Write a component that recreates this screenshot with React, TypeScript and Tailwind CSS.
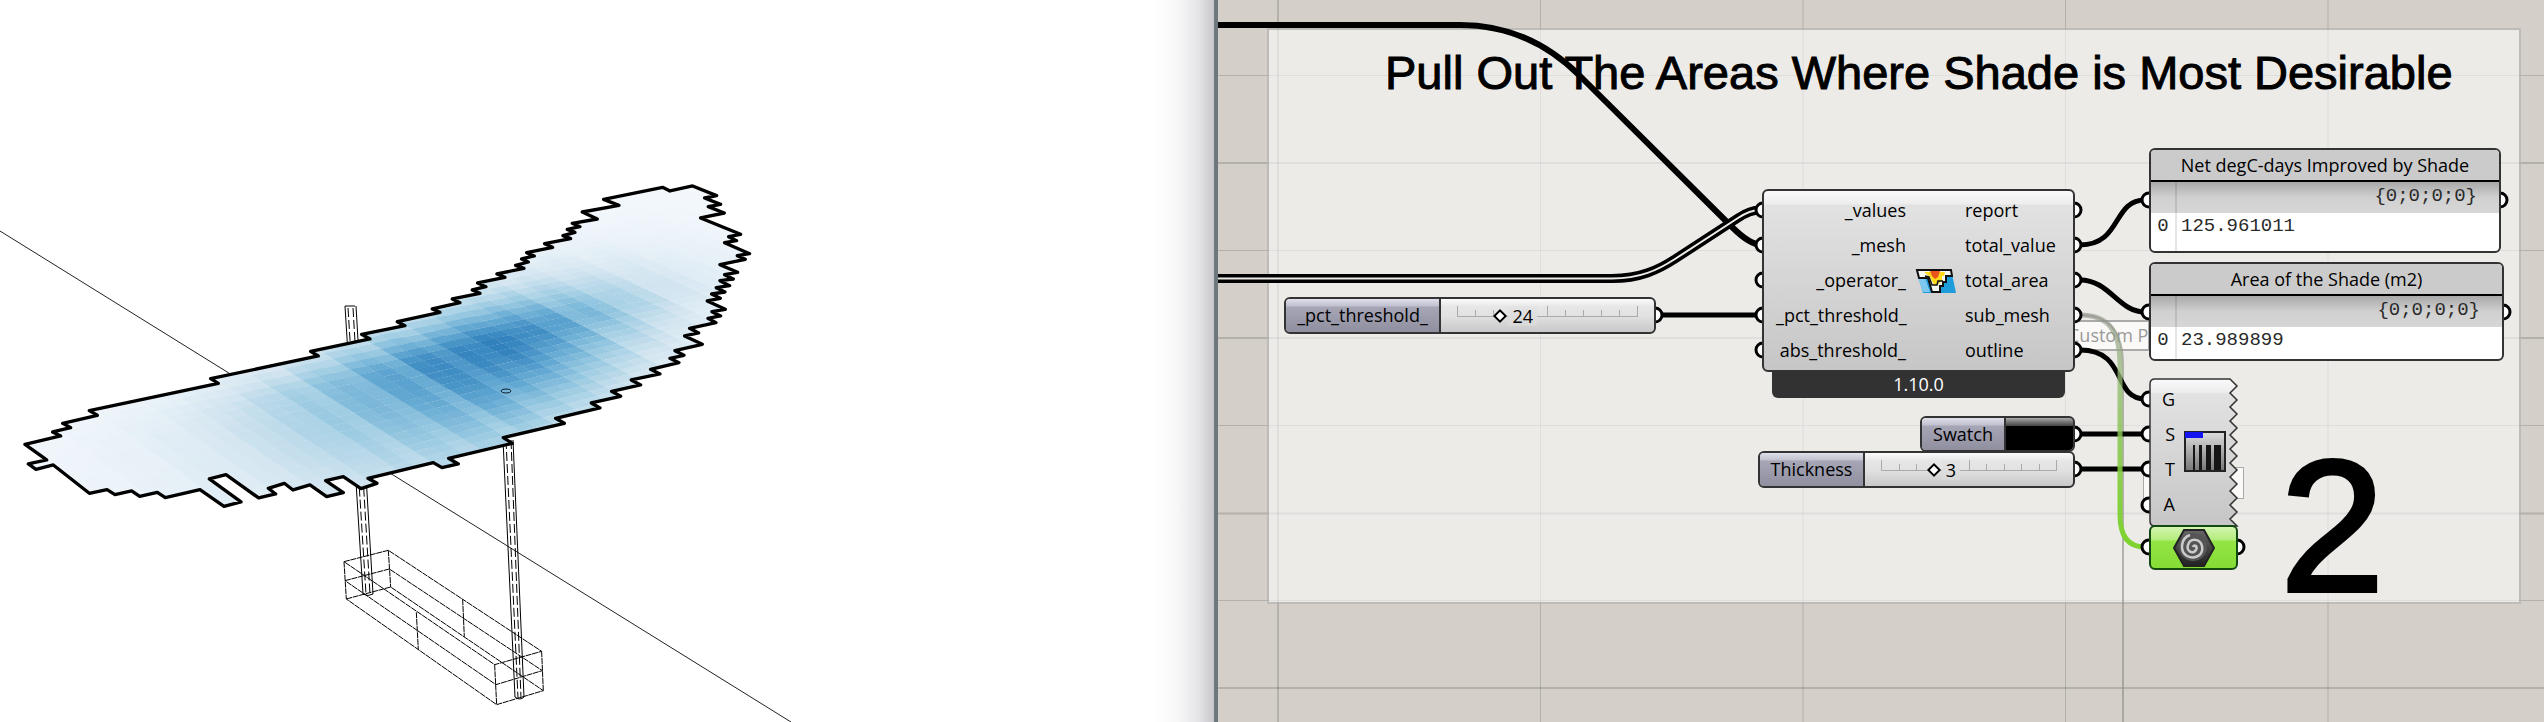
import { useState } from "react";

type Port = [number, number];

// The canvas is panned this far to the right in document space
const PAN_X = 1218;

const OUTLINE =
  "75,853 182,828 158,816 212,803 188,790 292,766 268,752 655,670 632,656 955,588 932,574 1110,537 1085,523 1215,497 1192,485 1320,457 1297,447 1380,428 1357,417 1440,400 1417,390 1458,380 1433,369 1515,352 1491,342 1572,325 1547,316 1585,306 1565,297 1603,288 1580,278 1658,262 1634,251 1712,236 1689,227 1725,217 1702,208 1740,200 1717,190 1792,177 1747,156 1857,136 1811,118 1988,82 2010,93 2078,78 2150,107 2114,114 2162,133 2125,140 2173,159 2102,174 2222,223 2186,230 2210,242 2174,248 2249,281 2212,287 2236,298 2160,314 2213,337 2174,344 2200,357 2160,362 2189,377 2149,383 2175,396 2135,402 2161,415 2122,423 2176,448 2136,455 2162,468 2124,475 2148,488 2069,505 2096,519 2054,528 2107,553 2025,572 2052,586 2010,595 2037,608 1952,628 1980,642 1894,660 1922,675 1835,694 1862,709 1774,729 1800,744 1667,775 1693,790 1510,833 1537,850 1346,895 1375,912 1326,923 1300,908 1104,955 1131,970 1083,986 1030,950 977,962 1030,998 980,1010 930,975 879,990 853,970 805,985 827,1002 776,1014 678,944 628,957 723,1026 672,1039 600,989 496,1013 472,997 419,1009 395,993 345,1004 321,989 268,1000 160,915 108,928 85,912 140,900";

const RAMP = [
  [244, 248, 252],
  [211, 229, 240],
  [156, 203, 226],
  [98, 168, 210],
  [49, 129, 189],
];

const STRIP_GAIN = [
  1, 0.97, 1.02, 0.95, 1.03, 0.88, 1.03, 1, 0.9, 1.03, 1, 0.87, 1.04, 1.02,
  0.91, 1, 0.96, 1.03,
];

function rampColor(t: number) {
  const p = Math.min(Math.max(t, 0), 0.999) * (RAMP.length - 1);
  const i = Math.floor(p);
  const f = p - i;
  const mix = RAMP[i].map((c, k) => Math.round(c + (RAMP[i + 1][k] - c) * f));
  return `rgb(${mix.join(",")})`;
}

// Skewed mesh: u runs along the canopy, v across it
function meshPoint(u: number, v: number) {
  const slope = 0.78 - 0.00015 * u;
  return [u + v, 900 - 0.222 * u + v * slope];
}

function buildCells() {
  const cells: { points: string; fill: string }[] = [];
  const du = 48;
  const dv = 26;
  for (let i = 0; i < 62; i++) {
    for (let j = 0; j < 66; j++) {
      const u = -200 + i * du;
      const v = -800 + j * dv;
      const [x, y] = meshPoint(u + du / 2, v + dv / 2);
      if (x < 0 || x > 2320 || y < 20 || y > 1100) continue;
      const a = x - 1480;
      const b = y - 550 + 0.25 * a;
      const sa = a < 0 ? 680 : 470;
      const sb = b < 0 ? 145 : 340;
      const t =
        Math.exp(-((Math.abs(a) / sa) ** 1.8) - (Math.abs(b) / sb) ** 1.6) *
        STRIP_GAIN[i % STRIP_GAIN.length];
      const corners = [
        meshPoint(u, v),
        meshPoint(u + du + 1, v),
        meshPoint(u + du + 1, v + dv + 1),
        meshPoint(u, v + dv + 1),
      ];
      cells.push({
        points: corners.map((c) => c.map(Math.round).join(",")).join(" "),
        fill: rampColor(t),
      });
    }
  }
  return cells;
}

const CELLS = buildCells();

function Viewport() {
  return (
    <section
      aria-label="Perspective viewport"
      className="relative h-full overflow-hidden bg-white border-r-4 border-[#6c787d]"
    >
      <svg className="absolute inset-0 w-full h-full">
        <defs>
          <clipPath id="canopy">
            <polygon points={OUTLINE} />
          </clipPath>
        </defs>
        <path d="M0 231L791 722" stroke="#222" strokeWidth="1" />
        {/* posts */}
        <g stroke="#000" strokeWidth="1" fill="none">
          <path d="M345 306L363 594M356 306L373 594M345 306H355M363 594Q368 597 373 594" />
          <path d="M503 440L515 697M513 440L524 697M515 697Q520 701 524 697" />
          <path
            d="M348 308L366 594M353 308L370 594M506 440L518 698M511 440L521 698"
            strokeDasharray="9 3"
          />
        </g>
        {/* footing */}
        <g
          transform="translate(300 460) scale(0.3333)"
          stroke="#000"
          strokeWidth="3"
          fill="none"
          strokeDasharray="18 2"
        >
          <path d="M132 305L265 271L725 574L584 614Z" />
          <path d="M135 362L268 327L727 632L588 674Z" />
          <path d="M139 417L272 381L730 692L590 734Z" />
          <path d="M132 305L139 417M265 271L272 381M725 574L730 692M584 614L590 734M349 457L355 569M488 418L493 530" />
        </g>
        <g transform="translate(0 160) scale(0.3333)">
          <polygon points={OUTLINE} fill="#eef4fa" />
          <g clipPath="url(#canopy)">
            {CELLS.map((cell) => (
              <polygon key={cell.points} points={cell.points} fill={cell.fill} />
            ))}
          </g>
          <polygon
            points={OUTLINE}
            fill="none"
            stroke="#000"
            strokeWidth="10"
            strokeLinejoin="round"
          />
        </g>
        <ellipse cx="506" cy="391" rx="5" ry="2" fill="none" stroke="#123" />
      </svg>
      <div className="absolute inset-y-0 right-0 w-[60px] bg-[linear-gradient(to_right,transparent_0%,#f7f7f8_40%,#e4e4e7_75%,#c6c6cb_100%)]" />
    </section>
  );
}

const PORTS: Port[] = [
  [1763, 210], [1763, 245], [1763, 280], [1763, 315], [1763, 350],
  [2074, 210], [2074, 245], [2074, 280], [2074, 315], [2074, 350],
  [1655, 315], [2074, 434], [2074, 469],
  [2149, 200], [2500, 200], [2149, 312], [2503, 312],
  [2149, 399], [2149, 434], [2149, 469], [2149, 505],
  [2149, 547], [2237, 547],
];

function GridLines() {
  return (
    <svg className="absolute inset-0 w-full h-full">
      <g transform={`translate(${-PAN_X} 0)`} stroke="#000" strokeOpacity="0.15">
        <path d="M1278 0V4000" strokeWidth="2" />
        <path d="M1540.5 0V4000M1803 0V4000M2065.5 0V4000M2328 0V4000M2590.5 0V4000" />
        <path d="M0 75.5H6000M0 250.5H6000M0 425.5H6000M0 600.5H6000" />
        <path d="M0 163H6000M0 338H6000M0 513.5H6000M0 688H6000" strokeWidth="2" />
      </g>
    </svg>
  );
}

function Wires() {
  const doubleWire =
    "M1218 278.5H1612C1640 278.5 1658 270 1675 259L1738 218Q1750 210 1760 210";
  return (
    <svg className="absolute inset-0 w-full h-full">
      <defs>
        <linearGradient
          id="selected"
          gradientUnits="userSpaceOnUse"
          x1="0"
          y1="314"
          x2="0"
          y2="540"
        >
          <stop offset="0" stopColor="#8f918a" stopOpacity="0.6" />
          <stop offset="0.25" stopColor="#94b878" stopOpacity="0.75" />
          <stop offset="0.7" stopColor="#80cc3c" stopOpacity="0.9" />
          <stop offset="1" stopColor="#7ed331" />
        </linearGradient>
      </defs>
      <g transform={`translate(${-PAN_X} 0)`} fill="none">
        <path
          d="M2080 315C2112 315 2123 335 2123 365V4000"
          stroke="#8d8b86"
          strokeOpacity="0.6"
          strokeWidth="2"
        />
        <path
          d="M1218 25H1460C1510 25 1548 44 1580 76L1732 227Q1750 245 1762 245"
          stroke="#000"
          strokeWidth="6"
        />
        <g stroke="#000" strokeWidth="5">
          <path d="M1660 315H1760" />
          <path d="M2080 245C2122 245 2112 200 2145 200" />
          <path d="M2080 280C2110 280 2118 312 2145 312" />
          <path d="M2080 350C2128 350 2112 399 2145 399" />
          <path d="M2080 434H2145M2080 469H2145" />
        </g>
        <path d={doubleWire} stroke="#000" strokeWidth="9" />
        <path d={doubleWire} stroke="#ecebe7" strokeWidth="2" />
        <path
          d="M2080 315C2112 315 2120 335 2120 365V515Q2120 547 2145 547"
          stroke="url(#selected)"
          strokeWidth="5"
        />
        {PORTS.map(([x, y]) => (
          <circle
            key={`${x}-${y}`}
            cx={x}
            cy={y}
            r="7"
            fill="#fff"
            stroke="#000"
            strokeWidth="3"
          />
        ))}
      </g>
    </svg>
  );
}

function ShadeIcon() {
  return (
    <svg viewBox="0 0 42 26" className="w-[42px] h-[26px]">
      <path d="M1 1H36L41 25H8Z" fill="#1f9cdc" />
      <path d="M3 10L10 10L15 24H8Z" fill="#7cc8ee" />
      <path
        d="M2 2H36L37 8H31V14H28V18H25V24H17L13 10H4Z"
        fill="#f4f8ee"
        stroke="#111"
        strokeWidth="2"
      />
      <path d="M9 4H30L29 8H27V13L22 17H19L15 9Z" fill="#ffd91c" />
      <path d="M15 3H25L23 9L20 11L17 8Z" fill="#e8541c" />
      <path d="M10 8L14 9L17 17H22L23 13H28" fill="none" stroke="#111" strokeWidth="1.5" />
    </svg>
  );
}

const INPUTS = ["_values", "_mesh", "_operator_", "_pct_threshold_", "abs_threshold_"];
const OUTPUTS = ["report", "total_value", "total_area", "sub_mesh", "outline"];

function ThresholdComponent() {
  return (
    <article className="absolute left-[544px] top-[189px] w-[313px]">
      <div className="flex h-[183px] items-center justify-between rounded-md border-2 border-[#333] bg-[linear-gradient(#fafafa_0px,#ededed_13px,#e2e2e2_14px,#c6c6c6_100%)] pl-3 pr-[14px]">
        <ul className="w-[130px] text-right">
          {INPUTS.map((name) => (
            <li key={name} className="h-[35px] leading-[35px]">
              {name}
            </li>
          ))}
        </ul>
        <ShadeIcon />
        <ul className="w-[94px]">
          {OUTPUTS.map((name) => (
            <li key={name} className="h-[35px] leading-[35px]">
              {name}
            </li>
          ))}
        </ul>
      </div>
      <div className="mx-[10px] h-[26px] rounded-b-md bg-[#323232] text-center leading-[24px] text-white">
        1.10.0
      </div>
    </article>
  );
}

interface SliderProps {
  id: string;
  label: string;
  max: number;
  initial: number;
  className: string;
  labelClass: string;
  trackClass: string;
}

function NumberSlider({ id, label, max, initial, className, labelClass, trackClass }: SliderProps) {
  const [value, setValue] = useState(initial);
  const ratio = value / max;

  return (
    <div
      className={`absolute flex h-[37px] overflow-hidden rounded-md border-2 border-[#333] bg-[linear-gradient(#fbfbfb_0px,#e6e6e6_8px,#e2e2e2_50%,#c8c8c8_100%)] ${className}`}
    >
      <label
        htmlFor={id}
        className={`border-r-2 border-[#333] bg-[linear-gradient(#e0e0ea_0px,#c0c0cf_7px,#a6a6b6_8px,#8f8f9f_100%)] text-center leading-[33px] ${labelClass}`}
      >
        {label}
      </label>
      <div className={`relative my-auto h-[20px] ${trackClass}`}>
        <div className="flex h-[11px] justify-between border-b border-[#aaa]">
          {Array.from({ length: 11 }, (_, i) => (
            <span
              key={i}
              className={`w-px self-end bg-[#aaa] ${i % 5 === 0 ? "h-[10px]" : "h-[6px]"}`}
            />
          ))}
        </div>
        <span
          className="absolute inset-y-0 bg-[linear-gradient(#e4e4e4,#d8d8d8)] px-1 leading-[20px]"
          style={{ left: `calc(${ratio * 100}% + 8px)` }}
        >
          {value}
        </span>
        <input
          id={id}
          type="range"
          min={0}
          max={max}
          value={value}
          onChange={(e) => setValue(Number(e.target.value))}
          className="absolute inset-y-0 -left-[5px] w-[calc(100%+10px)] appearance-none bg-transparent [&::-webkit-slider-thumb]:h-[10px] [&::-webkit-slider-thumb]:w-[10px] [&::-webkit-slider-thumb]:rotate-45 [&::-webkit-slider-thumb]:appearance-none [&::-webkit-slider-thumb]:border-[2px] [&::-webkit-slider-thumb]:border-black [&::-webkit-slider-thumb]:bg-white"
        />
      </div>
    </div>
  );
}

function ColourSwatch() {
  const [colour, setColour] = useState("#000000");
  return (
    <div className="absolute left-[702px] top-[416px] flex h-[36px] w-[155px] overflow-hidden rounded-md border-2 border-[#333]">
      <label
        htmlFor="swatch"
        className="w-[84px] border-r-2 border-[#333] bg-[linear-gradient(#e0e0ea_0px,#c0c0cf_7px,#a6a6b6_8px,#8f8f9f_100%)] text-center leading-[32px]"
      >
        Swatch
      </label>
      <div className="relative flex-1">
        <input
          id="swatch"
          type="color"
          value={colour}
          onChange={(e) => setColour(e.target.value)}
          className="block h-full w-full appearance-none bg-black [&::-webkit-color-swatch-wrapper]:p-0 [&::-webkit-color-swatch]:border-0"
        />
        <div className="pointer-events-none absolute inset-x-0 top-0 h-2 bg-linear-to-b from-[#aaa] to-[#444]" />
      </div>
    </div>
  );
}

interface PanelProps {
  title: string;
  value: string;
  className: string;
}

function DataPanel({ title, value, className }: PanelProps) {
  return (
    <article
      className={`absolute overflow-hidden rounded-md border-2 border-[#333] bg-white ${className}`}
    >
      <h2 className="h-[32px] border-b-2 border-black bg-[#cbcbcb] text-center leading-[30px]">
        {title}
      </h2>
      <table className="w-full border-collapse font-['Liberation_Mono',monospace] text-[19px] text-[#2a2a2a]">
        <thead>
          <tr className="h-[31px] bg-linear-to-b from-[#a9a9a9] via-[#d0d0d0] to-[#d7d7d7]">
            <th className="w-[25px] border-r-2 border-black/10" aria-label="Index" />
            <th className="pr-[22px] pb-1 text-right font-normal leading-[24px]">
              {"{0;0;0;0}"}
            </th>
          </tr>
        </thead>
        <tbody>
          <tr className="h-[44px] align-top">
            <td className="border-r-2 border-black/10 text-center leading-[26px]">0</td>
            <td className="pl-1 leading-[26px]">{value}</td>
          </tr>
        </tbody>
      </table>
    </article>
  );
}

function PreviewComponent() {
  let edge = "M81 1";
  for (let i = 1; i <= 21; i++) edge += `L${i % 2 ? 88 : 81} ${1 + i * 7}`;
  return (
    <article className="absolute left-[931px] top-[378px] h-[149px] w-[90px]">
      <svg viewBox="0 0 90 149" className="absolute inset-0 h-full w-full">
        <defs>
          <linearGradient id="body" x1="0" y1="0" x2="0" y2="1">
            <stop offset="0" stopColor="#fafafa" />
            <stop offset="0.09" stopColor="#ededed" />
            <stop offset="0.1" stopColor="#e2e2e2" />
            <stop offset="1" stopColor="#c6c6c6" />
          </linearGradient>
          <linearGradient id="plate" x1="0" y1="0" x2="0" y2="1">
            <stop offset="0" stopColor="#ddd" />
            <stop offset="1" stopColor="#777" />
          </linearGradient>
        </defs>
        <path
          d={`${edge}H6Q1 148 1 143V6Q1 1 6 1Z`}
          fill="url(#body)"
          stroke="#333"
          strokeWidth="1.5"
        />
        <rect x="36" y="54" width="40" height="39" fill="url(#plate)" stroke="#222" strokeWidth="2" />
        <rect x="36" y="54" width="18" height="6" fill="#1414f0" />
        <path
          d="M44 67H46V92H44ZM50 67H53V92H50ZM57 67H62V92H57ZM65 67H72V92H65Z"
          fill="#151515"
        />
      </svg>
      <ul className="relative w-[26px] pt-1 text-right">
        {["G", "S", "T", "A"].map((name) => (
          <li key={name} className="h-[35px] leading-[35px]">
            {name}
          </li>
        ))}
      </ul>
    </article>
  );
}

function SpiralNode() {
  return (
    <button
      type="button"
      aria-label="Mesh"
      className="absolute left-[931px] top-[525px] flex h-[45px] w-[89px] items-center justify-center rounded-md border-2 border-[#124a12] bg-[linear-gradient(#d2f5b0_0px,#b4ec7c_13px,#93e544_14px,#86db35_100%)]"
    >
      <svg viewBox="0 0 42 38" className="h-[38px] w-[42px]">
        <defs>
          <linearGradient id="nut" x1="0" y1="0" x2="0" y2="1">
            <stop offset="0" stopColor="#666" />
            <stop offset="1" stopColor="#222" />
          </linearGradient>
        </defs>
        <path d="M11 1H31L41 19L31 37H11L1 19Z" fill="url(#nut)" stroke="#222" strokeWidth="2" />
        <circle cx="20" cy="18" r="14" fill="#555" />
        <path
          d="M20 18C21 15 25 17 23 21C20 26 13 22 15 16C17 9 27 9 29 17C31 26 22 31 14 27C6 22 8 9 17 6"
          fill="none"
          stroke="#ccc"
          strokeWidth="2.5"
        />
      </svg>
    </button>
  );
}

function Canvas() {
  return (
    <section
      aria-label="Definition canvas"
      className="relative h-full overflow-hidden bg-[#d4cfc8]"
    >
      <GridLines />
      <div className="absolute left-[49px] top-[28px] h-[576px] w-[1254px] border-2 border-black/20 bg-[rgba(253,253,253,0.6)]" />
      <div className="absolute left-[848px] top-[320px] h-[31px] w-[84px] overflow-hidden border-2 border-[#aaa] bg-white/70 leading-[27px] whitespace-nowrap text-[#999]">
        Custom P
      </div>
      <div className="absolute left-[925px] top-[467px] h-[32px] w-[101px] border border-[#aaa] bg-white/70" />
      <h1 className="absolute left-[167px] top-[46px] whitespace-nowrap font-['Liberation_Sans',Arial,sans-serif] text-[47px] leading-[54px] [-webkit-text-stroke:1px_black]">
        Pull Out The Areas Where Shade is Most Desirable
      </h1>
      <p className="absolute left-[1062px] top-[432px] font-['Liberation_Sans',Arial,sans-serif] text-[188px] leading-[188px] [-webkit-text-stroke:4px_black]">
        2
      </p>
      <Wires />
      <NumberSlider
        id="pct-threshold"
        label="_pct_threshold_"
        max={100}
        initial={24}
        className="left-[66px] top-[297px] w-[372px]"
        labelClass="w-[155px]"
        trackClass="ml-4 w-[181px]"
      />
      <ThresholdComponent />
      <DataPanel
        title="Net degC-days Improved by Shade"
        value="125.961011"
        className="left-[931px] top-[148px] h-[105px] w-[352px]"
      />
      <DataPanel
        title="Area of the Shade (m2)"
        value="23.989899"
        className="left-[931px] top-[262px] h-[99px] w-[355px]"
      />
      <ColourSwatch />
      <NumberSlider
        id="thickness"
        label="Thickness"
        max={10}
        initial={3}
        className="left-[540px] top-[451px] w-[317px]"
        labelClass="w-[105px]"
        trackClass="ml-4 w-[176px]"
      />
      <PreviewComponent />
      <SpiralNode />
    </section>
  );
}

export default function App() {
  return (
    <main className="grid h-screen grid-cols-[1218fr_1326fr] overflow-hidden font-['Open_Sans','Noto_Sans',sans-serif] text-[18px] text-black">
      <Viewport />
      <Canvas />
    </main>
  );
}
